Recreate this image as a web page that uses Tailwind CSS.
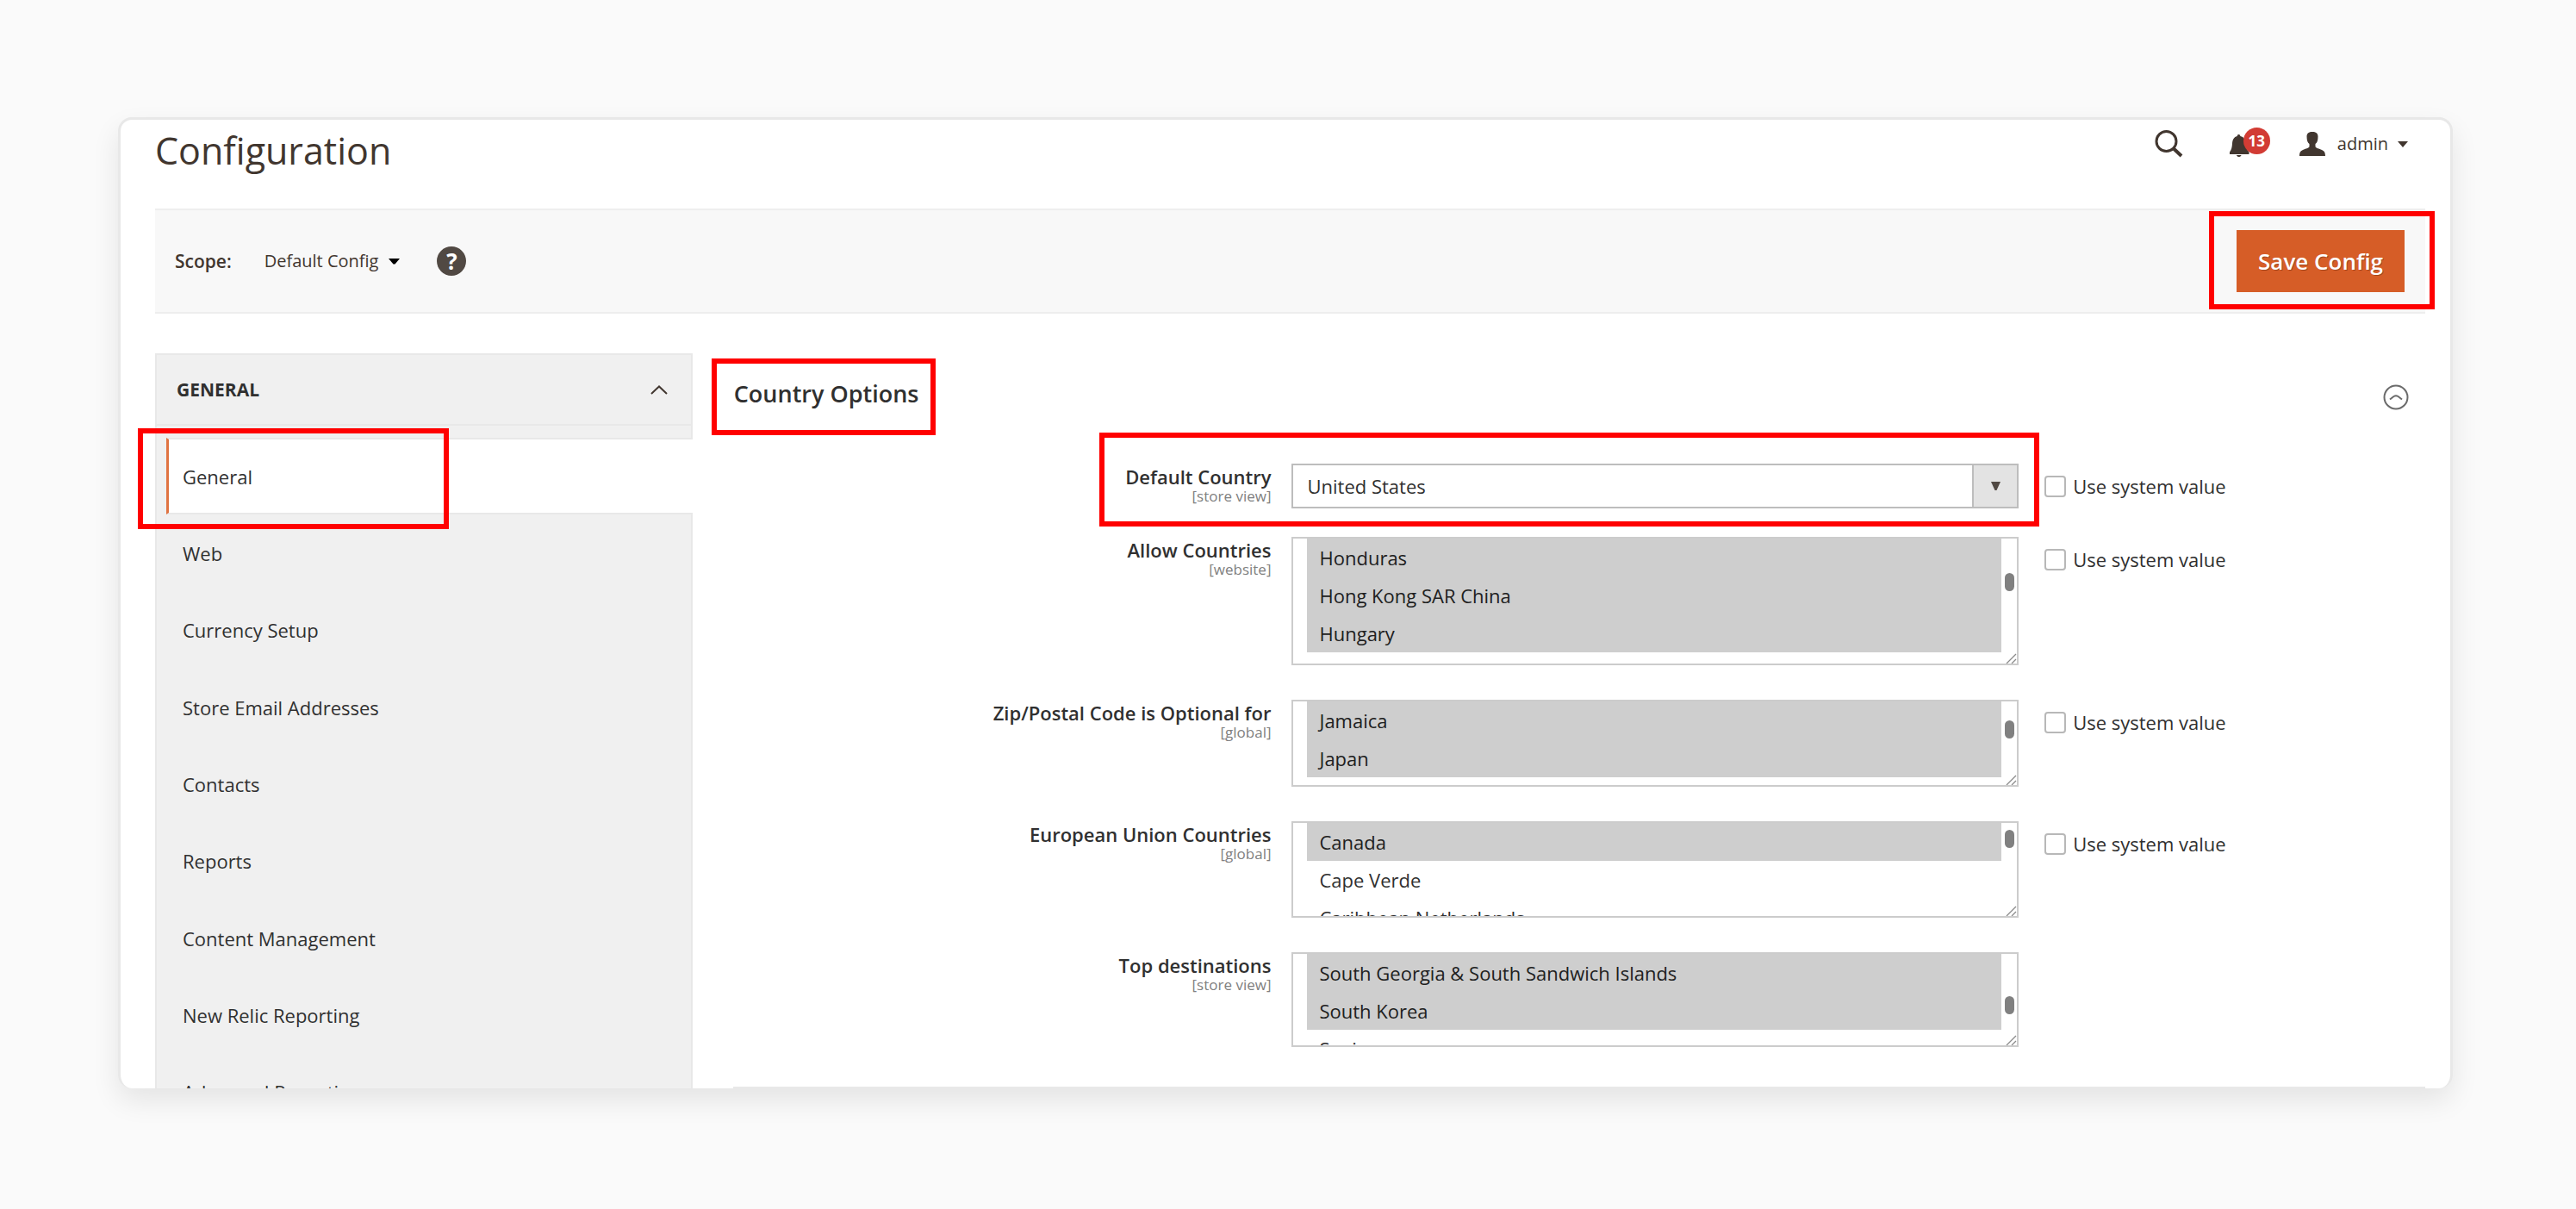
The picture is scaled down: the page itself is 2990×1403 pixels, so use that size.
<!DOCTYPE html>
<html lang="en">
<head>
    <meta charset="UTF-8">
    <meta name="viewport" content="width=device-width, initial-scale=1.0">
    <title>Configuration</title>
    <script src="https://cdn.jsdelivr.net/npm/@tailwindcss/browser@4"></script>
</head>
<body class="bg-[#fafafa] font-['Open_Sans',sans-serif] text-[22px] leading-[30px] text-[#303030]">
    <div class="h-screen flex flex-col pl-[137px] pr-[143px] pt-[136px] pb-[140px]">
        <div class="flex-1 min-h-0 overflow-hidden bg-white border-[#e8e8e8] border-x-3 border-t-3 rounded-2xl shadow-[0_14px_32px_rgba(0,0,0,0.09)] pl-10 pr-[29px]">

            <!-- Header -->
            <header class="h-[103px] flex justify-between items-start pr-5 text-[#41362f]">
                <h1 class="text-[43px] leading-[72px]">Configuration</h1>
                <div class="h-14 flex items-center">
                    <button type="button" aria-label="Search" class="mr-[54px]">
                        <svg class="w-[33px] h-8" viewBox="0 0 33 32" fill="none" stroke="#41362f">
                            <circle cx="13.5" cy="13" r="11.5" stroke-width="3"/>
                            <path d="M21.500 21L31 30" stroke-width="4"/>
                        </svg>
                    </button>
                    <button type="button" aria-label="Notifications" class="relative mr-[34px] w-[47px] h-8 flex items-center">
                        <svg class="w-[23px] h-[26px] mt-1" viewBox="0 0 23 26" fill="#41362f">
                            <path d="M10.500 0C11.600 0 12.300 .8 12.400 2C16.500 3 18.500 6 18.800 10C19.100 15 20 18 22.500 20.500V23H0V20.500C2 18 2.800 15 3 10.500C3.300 6 5 3 8.700 2C8.800 .8 9.500 0 10.500 0ZM8 24H13.500C13 25.400 12 26 10.800 26C9.500 26 8.500 25.400 8 24Z"/>
                        </svg>
                        <span class="absolute right-0 -top-[3px] size-[31px] rounded-full bg-[#d23c34] text-white text-[17px] leading-[31px] font-bold text-center">13</span>
                    </button>
                    <button type="button" class="flex items-center text-[20px]">
                        <svg class="w-[30px] h-7 mr-[14px]" viewBox="0 0 30 28" fill="#41362f">
                            <path d="M15 0C19 0 21.500 1.500 21.500 5.500C21.500 10 20.500 12.500 18.500 14V17C19 19 23 19.500 26 21C28.500 22 30 23.500 30 28H0C0 23.500 1.500 22 4 21C7 19.500 11 19 11.500 17V14C9.500 12.500 8.500 10 8.500 5.500C8.500 1.500 11 0 15 0Z"/>
                        </svg>
                        <span>admin</span>
                        <svg class="w-3 h-[7px] ml-[11px]" viewBox="0 0 12 7" fill="#41362f"><path d="M0 0H12L6 7Z"/></svg>
                    </button>
                </div>
            </header>

            <!-- Scope bar -->
            <div class="h-[122px] flex items-center justify-between bg-[#f8f8f8] border-y-2 border-[#eeeeee] pl-[23px] pr-6 text-[21px] text-[#41362f]">
                <div class="flex items-center">
                    <span class="font-semibold mr-[38px]">Scope:</span>
                    <button type="button" class="flex items-center text-[20px]">
                        Default Config
                        <svg class="w-[13px] h-[7px] ml-3" viewBox="0 0 13 7" fill="#000"><path d="M0 0H13L7.500 6.500H5.500Z"/></svg>
                    </button>
                    <button type="button" aria-label="Help" class="ml-[43px] size-[34px] rounded-full bg-[#514943] text-white text-[26px] leading-[34px] font-bold">?</button>
                </div>
                <div class="relative">
                    <button type="button" class="h-18 px-[25px] bg-[#d65d27] text-white text-[26px] font-semibold text-shadow-[1px_1px_0_rgba(0,0,0,0.25)]">Save Config</button>
                    <div class="absolute -left-8 -right-[35px] -top-[22px] -bottom-5 border-6 border-[#ff0000] pointer-events-none"></div>
                </div>
            </div>

            <div class="grid grid-cols-[624fr_1990fr] gap-x-[22px] items-start pt-[46px]">

                <!-- Sidebar -->
                <aside class="bg-[#f0f0f0] border-2 border-b-0 border-[#e8e8e8]">
                    <button type="button" class="w-full h-[82px] flex items-center justify-between pl-[23px] pr-[27px] border-b-2 border-[#e8e8e8] text-[21px] font-bold">
                        GENERAL
                        <svg class="w-5 h-[11px]" viewBox="0 0 20 11" fill="none" stroke="#41362f" stroke-width="2"><path d="M1 10L10 1.500L19 10"/></svg>
                    </button>
                    <nav class="relative pt-[14px]">
                        <ul id="navList" class="h-[804px] grid auto-rows-fr"></ul>
                        <div class="absolute -left-[22px] top-[3px] w-[361px] h-[117px] border-6 border-[#ff0000] pointer-events-none"></div>
                    </nav>
                </aside>

                <!-- Country options -->
                <main class="pt-[6px]">
                    <div class="flex items-center justify-between pr-[19px]">
                        <h2 class="h-[89px] flex items-center border-6 border-[#ff0000] pl-5 pr-[14px] pb-2 text-[27px] font-semibold">Country Options</h2>
                        <button type="button" aria-label="Collapse section">
                            <svg class="size-[30px]" viewBox="0 0 30 30" fill="none" stroke="#6b6b6b" stroke-width="2">
                                <circle cx="15" cy="15" r="13.500"/>
                                <path d="M8 17.500L12.500 14Q15 12.500 17.500 14L22 17.500"/>
                            </svg>
                        </button>
                    </div>

                    <form class="pt-[33px] pb-[46px]">
                        <div class="relative grid grid-cols-[650fr_844fr_448fr] gap-x-6 mb-[33px]">
                            <label for="defaultCountry" class="text-right font-semibold">Default Country
                                <span class="block text-[17px] leading-4 font-normal text-[#808080]">[store view]</span>
                            </label>
                            <div class="relative">
                                <select id="defaultCountry" class="appearance-none w-full h-[52px] pl-4 border-2 border-[#bdbdbd] bg-white">
                                    <option>United States</option>
                                </select>
                                <span class="absolute right-0 top-0 w-[54px] h-[52px] border-2 border-[#bdbdbd] bg-[#e3e3e3] flex items-center justify-center pointer-events-none">
                                    <svg class="w-[11px] h-[10px]" viewBox="0 0 11 10" fill="#514943"><path d="M0 0H11L6.500 10H4.500Z"/></svg>
                                </span>
                            </div>
                            <label class="h-[52px] pl-[6px] flex items-center gap-2">
                                <input type="checkbox" class="appearance-none size-[25px] border-2 border-[#b8b8b8] rounded bg-white">
                                Use system value
                            </label>
                            <div class="absolute left-[450px] right-[448px] -top-9 -bottom-[21px] border-6 border-[#ff0000] pointer-events-none"></div>
                        </div>
                        <div id="countryLists" class="flex flex-col gap-10"></div>
                    </form>
                    <hr class="ml-[25px] border-t-2 border-[#e8e8e8]">
                </main>
            </div>
        </div>
    </div>

    <script>
        const navItems = ['General', 'Web', 'Currency Setup', 'Store Email Addresses', 'Contacts', 'Reports', 'Content Management', 'New Relic Reporting', 'Advanced Reporting'];

        // thumb: offset of the scroll thumb from the top of the list
        const countryLists = [
            { id: 'allowCountries', label: 'Allow Countries', scope: 'website', height: 149, thumb: 42, selected: ['Honduras', 'Hong Kong SAR China', 'Hungary'], rest: [], system: true },
            { id: 'zipOptional', label: 'Zip/Postal Code is Optional for', scope: 'global', height: 101, thumb: 24, selected: ['Jamaica', 'Japan'], rest: [], system: true },
            { id: 'euCountries', label: 'European Union Countries', scope: 'global', height: 112, thumb: 10, selected: ['Canada'], rest: ['Cape Verde', 'Caribbean Netherlands'], system: true },
            { id: 'topDestinations', label: 'Top destinations', scope: 'store view', height: 110, thumb: 51, selected: ['South Georgia & South Sandwich Islands', 'South Korea'], rest: ['Spain'], system: false },
        ];

        document.getElementById('navList').innerHTML = navItems.map((item, index) => `
            <li class="flex">
                <a href="#" class="flex-1 flex items-center ml-[11px] pl-4 border-l-3 ${index === 0 ? 'bg-white border-[#e07341] font-medium -mr-[2px] border-y-2 border-y-[#e8e8e8]' : 'border-transparent'}">${item}</a>
            </li>
        `).join('');

        const optionClass = 'px-[14px] py-[7px] leading-[30px] checked:bg-linear-to-r checked:from-[#cecece] checked:to-[#cecece] checked:[-webkit-text-fill-color:#202020]';

        document.getElementById('countryLists').innerHTML = countryLists.map(list => `
            <div class="grid grid-cols-[650fr_844fr_448fr] gap-x-6">
                <label for="${list.id}" class="text-right font-semibold">${list.label}
                    <span class="block text-[17px] leading-4 font-normal text-[#808080]">[${list.scope}]</span>
                </label>
                <div class="relative" style="height: ${list.height}px">
                    <select id="${list.id}" multiple class="w-full h-full pl-4 pr-[18px] border-2 border-[#cccccc] bg-white [scrollbar-width:none]">
                        ${list.selected.map(name => `<option selected class="${optionClass}">${name}</option>`).join('')}
                        ${list.rest.map(name => `<option class="${optionClass}">${name}</option>`).join('')}
                    </select>
                    <span class="absolute right-[5px] w-[11px] h-[21px] rounded-full bg-[#808080] pointer-events-none" style="top: ${list.thumb}px"></span>
                    <svg class="absolute right-[2px] bottom-[2px] w-[13px] h-3 pointer-events-none" viewBox="0 0 13 12" fill="none" stroke="#8a8a8a" stroke-width="1.300"><path d="M1 12L12 1M7 12L12 7"/></svg>
                </div>
                ${list.system ? `
                <label class="h-[52px] pl-[6px] flex items-center gap-2">
                    <input type="checkbox" class="appearance-none size-[25px] border-2 border-[#b8b8b8] rounded bg-white">
                    Use system value
                </label>` : ''}
            </div>
        `).join('');
    </script>
</body>
</html>
